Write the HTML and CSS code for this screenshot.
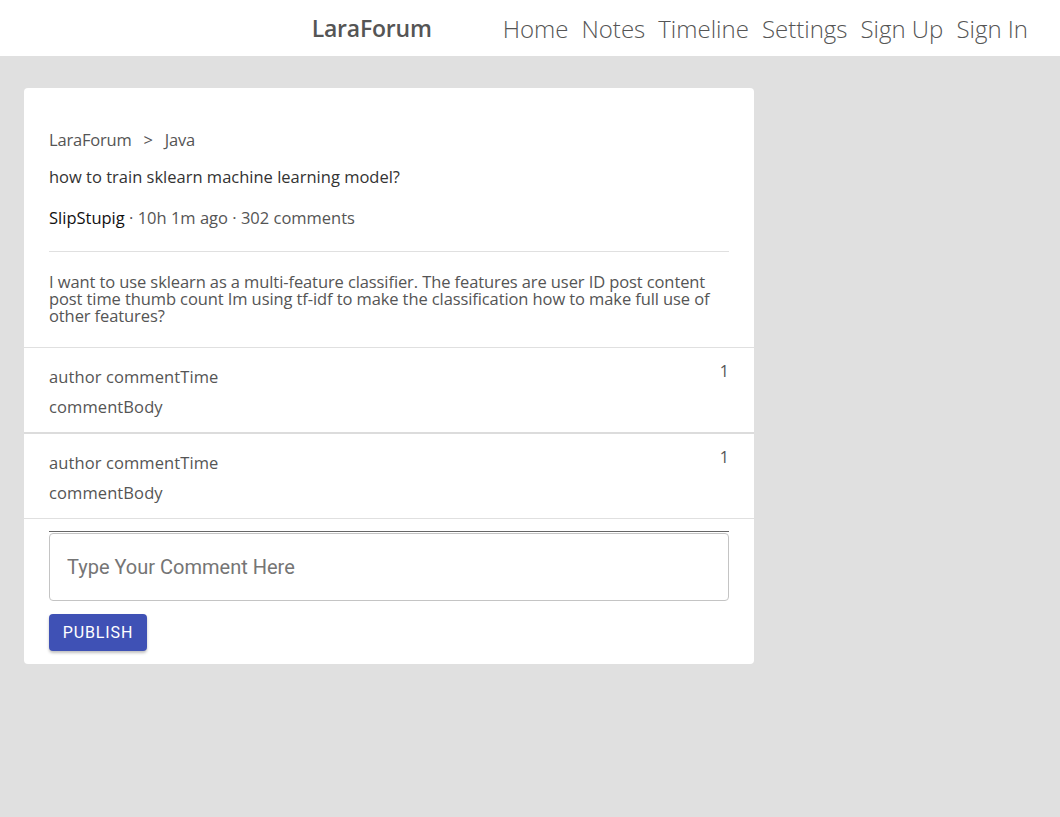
FILE: index.html
```html
<!DOCTYPE html>
<html>
<head>
<meta charset="utf-8">
<link rel="stylesheet" href="styles.css">
</head>
<body>
<header class="topbar">
  <a class="brand">LaraForum</a>
  <nav class="nav">
    <a>Home</a><a>Notes</a><a>Timeline</a><a>Settings</a><a>Sign Up</a><a>Sign In</a>
  </nav>
</header>
<main class="main">
  <section class="card">
    <div class="post">
      <div class="crumbs"><span>LaraForum</span><span class="sep">&gt;</span><span>Java</span></div>
      <h1 class="title">how to train sklearn machine learning model?</h1>
      <div class="meta"><span class="author">SlipStupig</span> · 10h 1m ago · 302 comments</div>
      <hr class="rule">
      <p class="body">I want to use sklearn as a multi-feature classifier. The features are user ID post content post time thumb count Im using tf-idf to make the classification how to make full use of other features?</p>
    </div>
    <div class="comment thick">
      <div class="c-text">
        <div class="c-head">author commentTime</div>
        <div class="c-body">commentBody</div>
      </div>
      <div class="c-num">1</div>
    </div>
    <div class="comment">
      <div class="c-text">
        <div class="c-head">author commentTime</div>
        <div class="c-body">commentBody</div>
      </div>
      <div class="c-num">1</div>
    </div>
    <div class="reply">
      <div class="reply-line"></div>
      <input class="reply-input" type="text" placeholder="Type Your Comment Here">
      <button class="publish">PUBLISH</button>
    </div>
  </section>
</main>
</body>
</html>
```
FILE: styles.css
```css
html, body {
  margin: 0;
  padding: 0;
}
body {
  background: #e0e0e0;
  font-family: "Open Sans", "Noto Sans", sans-serif;
  color: #555;
  min-height: 817px;
}
.topbar {
  height: 56px;
  background: #fff;
  display: flex;
  align-items: center;
  justify-content: flex-end;
  padding-right: 32px;
}
.brand {
  font-size: 23px;
  font-weight: 600;
  color: #555;
  margin-right: 71px;
  letter-spacing: -0.2px;
}
.nav {
  display: flex;
  gap: 13px;
}
.nav a {
  font-size: 24px;
  font-weight: 300;
  color: #555;
}
.main {
  padding: 32px 24px;
}
.card {
  width: 730px;
  background: #fff;
  border-radius: 4px;
  overflow: hidden;
}
.post {
  padding: 40px 25px 23px;
  border-bottom: 1px solid #e0e0e0;
}
.crumbs {
  font-size: 16.5px;
  line-height: 24px;
  color: #555;
  display: flex;
  gap: 12px;
  letter-spacing: -0.2px;
}
.title {
  margin: 13px 0 0;
  font-size: 16.5px;
  font-weight: 400;
  line-height: 24px;
  color: #333;
}
.meta {
  margin-top: 17px;
  font-size: 16.5px;
  line-height: 24px;
  color: #555;
}
.author {
  color: #111;
}
.rule {
  border: 0;
  border-top: 1px solid #e0e0e0;
  margin: 21px 0 0;
}
.body {
  margin: 21px 0 0;
  font-size: 16.5px;
  line-height: 17px;
  color: #555;
  letter-spacing: -0.1px;
}
.comment {
  display: flex;
  justify-content: space-between;
  padding: 14px 25px 10px;
  border-bottom: 1px solid #e0e0e0;
}
.comment.thick {
  border-bottom: 2px solid #dcdcdc;
}
.c-head, .c-body {
  font-size: 16.5px;
  line-height: 30px;
  letter-spacing: 0.1px;
}
.c-num {
  font-size: 16px;
  line-height: 20px;
  margin-top: -1px;
}
.reply {
  padding: 12px 25px 13px;
  display: flex;
  flex-direction: column;
  align-items: flex-start;
}
.reply-line {
  width: 100%;
  height: 1px;
  background: #666;
}
.reply-input {
  box-sizing: border-box;
  width: 100%;
  height: 68px;
  margin-top: 1px;
  border: 1px solid #c4c4c4;
  border-radius: 4px;
  padding: 0 17px;
  font-family: Roboto, "Liberation Sans", sans-serif;
  font-size: 20px;
  color: #333;
  outline: none;
}
.reply-input::placeholder {
  color: #757575;
}
.publish {
  margin-top: 13px;
  height: 37px;
  width: 98px;
  border: 0;
  border-radius: 4px;
  background: #3f51b5;
  color: #fff;
  font-family: Roboto, "Liberation Sans", sans-serif;
  font-size: 16px;
  letter-spacing: 0.9px;
  padding: 0;
  box-shadow: 0 2px 3px rgba(0,0,0,0.25);
}
```
